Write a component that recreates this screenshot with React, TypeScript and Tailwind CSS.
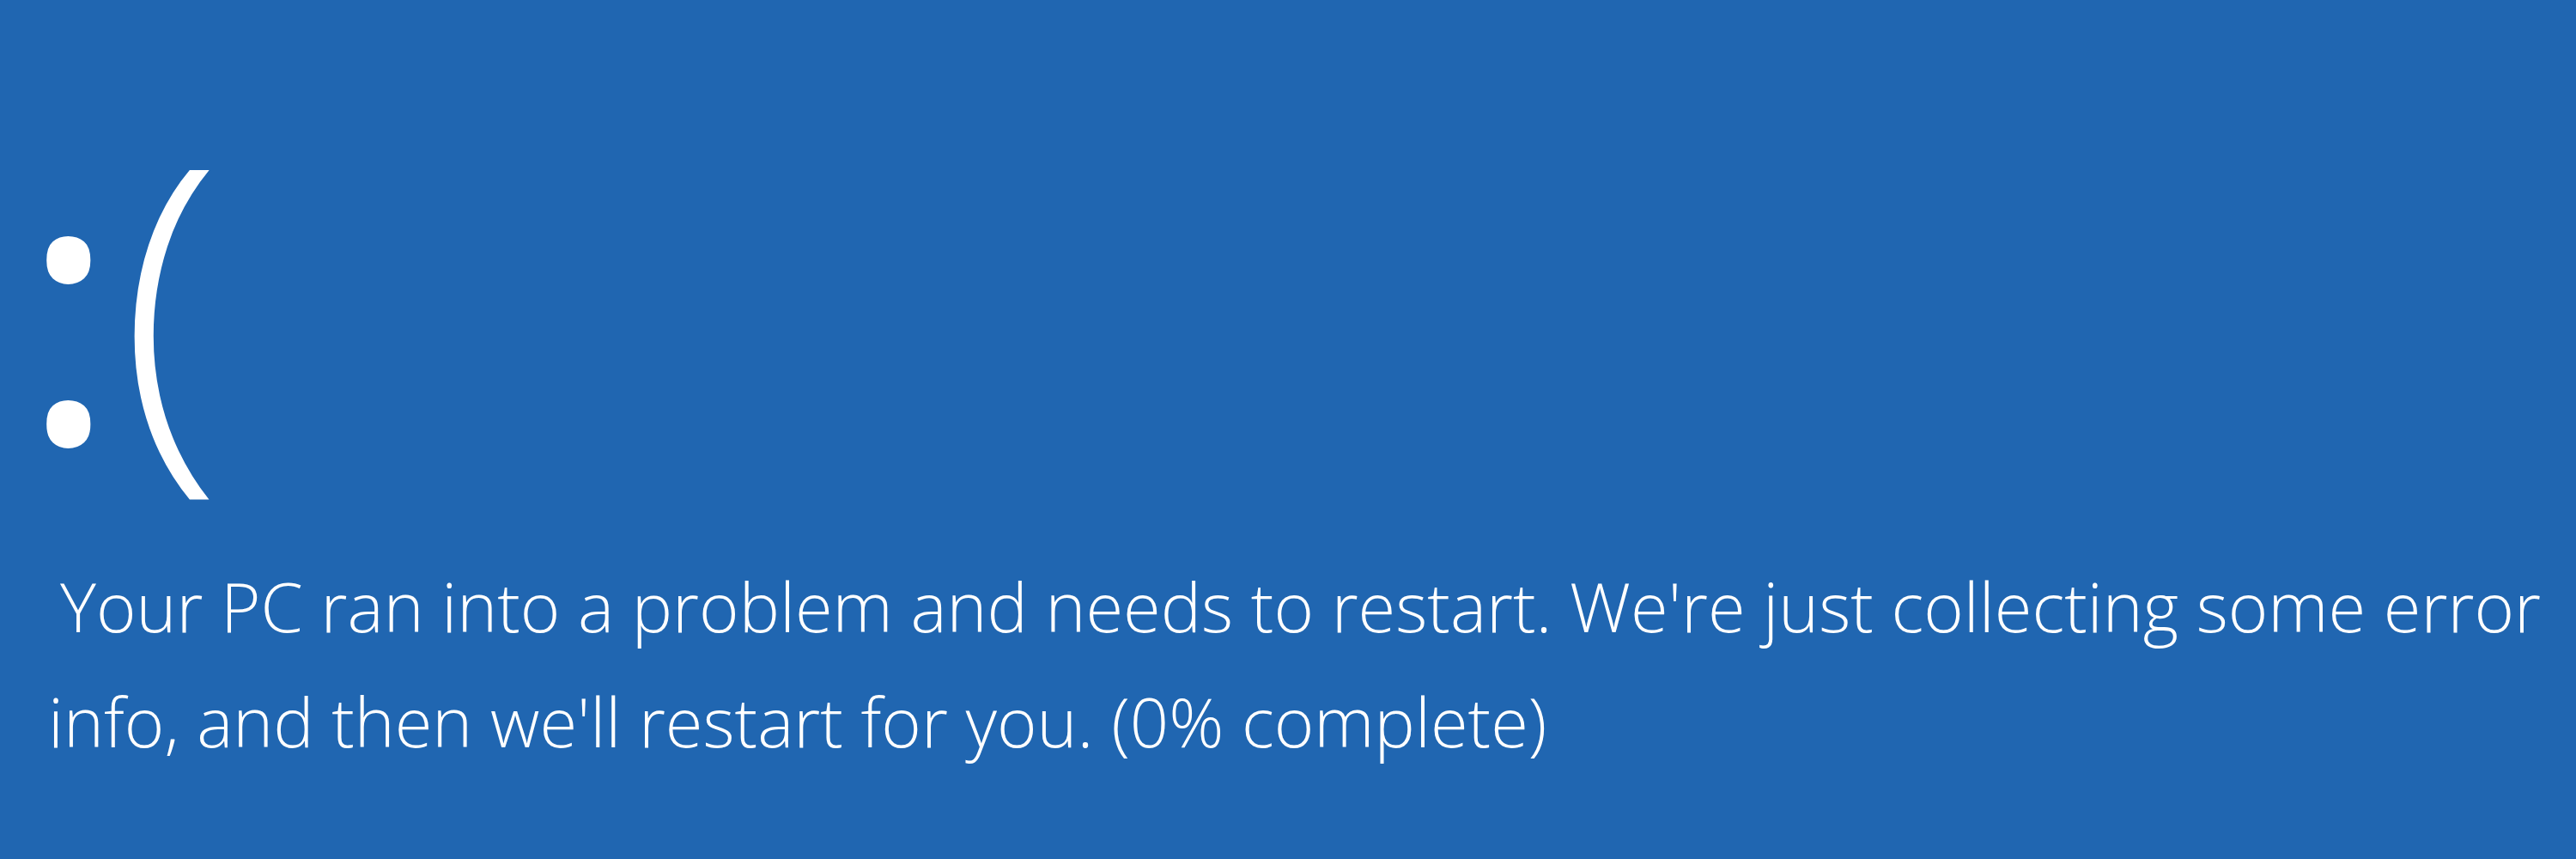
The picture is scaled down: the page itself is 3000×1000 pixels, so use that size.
export default function App() {
  return (
    <div className="w-[3000px] h-[1000px] overflow-hidden bg-[#2066b1] text-white font-['Open_Sans',sans-serif] font-light">
      {/* sad face */}
      <div className="flex items-start h-[638px] pt-[126px] pl-[22px]">
        <span className="text-[440px] leading-none font-normal">:</span>
        <span className="text-[440px] leading-none font-light -mt-[4px] ml-[1px]">(</span>
      </div>

      {/* message */}
      <div className="pl-[70px] text-[79.5px] leading-[134px]">
        <div className="whitespace-nowrap">
          Your PC ran into a problem and needs to restart. We're just collecting some error
        </div>
        <div className="whitespace-nowrap -ml-[14px]">
          info, and then we'll restart for you. (0% complete)
        </div>
      </div>
    </div>
  );
}
